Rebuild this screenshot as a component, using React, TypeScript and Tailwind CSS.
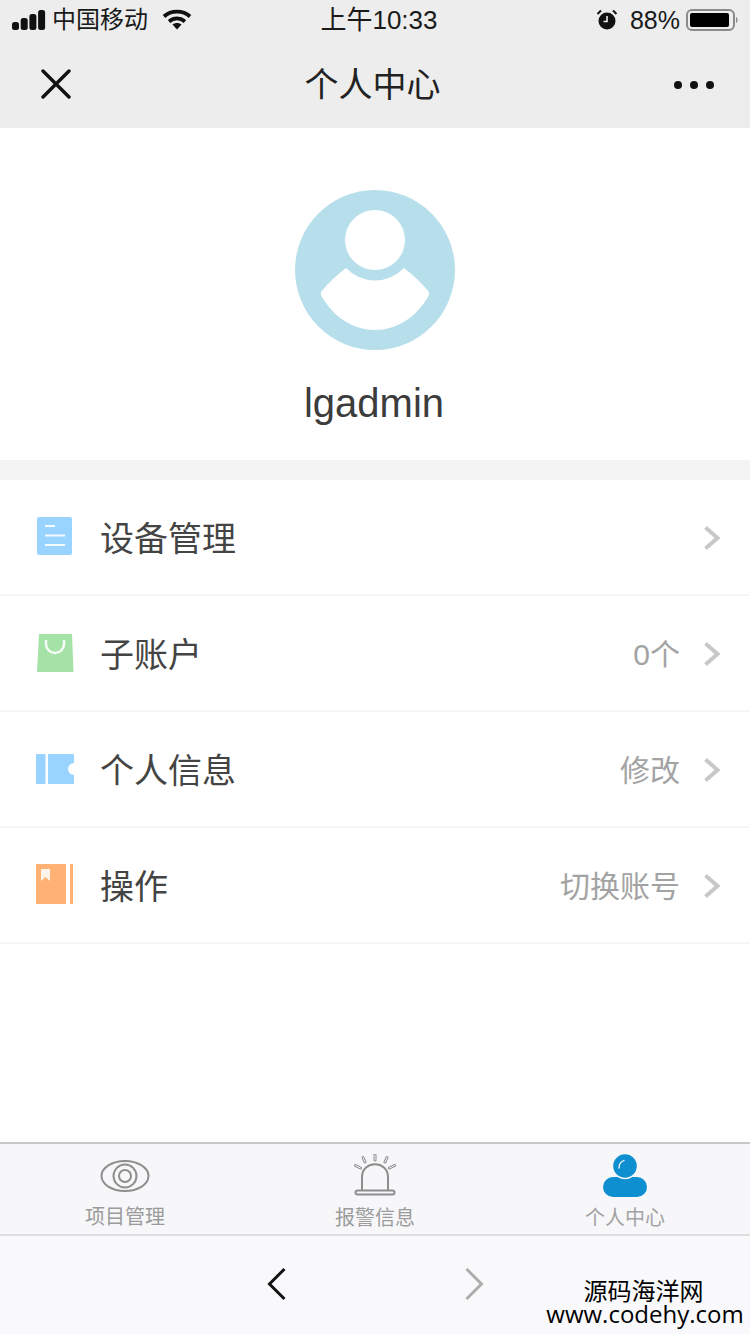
const cjk = "font-['Liberation_Sans','Noto_Sans_CJK_SC',sans-serif]";

function Chevron() {
  return (
    <svg className="h-[26px] w-[18px] shrink-0" viewBox="0 0 18 26" fill="none">
      <path d="M2.5 2.5 L14.5 13 L2.5 23.5" stroke="#c8c8c8" strokeWidth="4" strokeLinejoin="miter" />
    </svg>
  );
}

function ListIcon() {
  return (
    <svg className="h-[40px] w-[40px]" viewBox="0 0 40 40">
      <rect x="3" y="1" width="35" height="38" rx="2" fill="#99d3ff" />
      <path d="M11 10 H21 M11 19.5 H31 M11 29 H31" stroke="#ffffff" strokeWidth="2.2" opacity="0.9" />
    </svg>
  );
}

function BagIcon() {
  return (
    <svg className="h-[40px] w-[40px]" viewBox="0 0 40 40">
      <path d="M5 2 H38 L39.5 40 H3 Z" fill="#a5e2a8" />
      <path d="M12 8 V12 A9 9 0 0 0 30 12 V8" fill="none" stroke="#ffffff" strokeWidth="2.4" opacity="0.9" />
    </svg>
  );
}

function TicketIcon() {
  return (
    <svg className="h-[40px] w-[40px]" viewBox="0 0 40 40">
      <rect x="2" y="6" width="9.5" height="30" rx="1" fill="#99d3ff" />
      <path d="M14 7 A1 1 0 0 1 15 6 H39 A1 1 0 0 1 40 7 V15 A6 6 0 0 0 40 27 V35 A1 1 0 0 1 39 36 H15 A1 1 0 0 1 14 35 Z" fill="#99d3ff" />
    </svg>
  );
}

function BookIcon() {
  return (
    <svg className="h-[40px] w-[40px]" viewBox="0 0 40 40">
      <path d="M2 0 H32 V40 H2 Z" fill="#ffb273" />
      <path d="M36 0 H39 V40 H36 Z" fill="#ffb273" />
      <path d="M7 5 H16 V17 L11.5 13 L7 17 Z" fill="#ffffff" opacity="0.85" />
    </svg>
  );
}

const rows = [
  { label: "设备管理", value: "", icon: <ListIcon /> },
  { label: "子账户", value: "0个", icon: <BagIcon /> },
  { label: "个人信息", value: "修改", icon: <TicketIcon /> },
  { label: "操作", value: "切换账号", icon: <BookIcon /> },
];

export default function App() {
  return (
    <div className={`relative flex h-[1334px] w-[750px] flex-col overflow-hidden bg-white ${cjk}`}>
      {/* Status bar */}
      <div className="flex h-[40px] items-center justify-between bg-[#ededed] pl-3 pr-[10px] text-[#1a1a1a]">
        <div className="flex w-[200px] items-center">
          <svg className="h-[20px] w-[34px]" viewBox="0 0 34 20" fill="#111">
            <rect x="0" y="12" width="7" height="8" rx="2.5" />
            <rect x="8.7" y="8" width="7" height="12" rx="2.5" />
            <rect x="17.4" y="4" width="7" height="16" rx="2.5" />
            <rect x="26.1" y="0" width="7" height="20" rx="2.5" />
          </svg>
          <span className="ml-[6px] text-[24px] leading-none">中国移动</span>
          <svg className="ml-[14px] h-[22px] w-[30px]" viewBox="0 0 30 22" fill="none" stroke="#111" strokeWidth="3.8">
            <path d="M2 7.5 C9 1 21 1 28 7.5" />
            <path d="M7 12.5 C12 8.5 18 8.5 23 12.5" />
            <path d="M10.5 15.5 L15 20.5 L19.5 15.5 C17 13.5 13 13.5 10.5 15.5 Z" fill="#111" stroke="none" />
          </svg>
        </div>
        <span className="ml-[-50px] text-[26px] leading-none">上午10:33</span>
        <div className="flex items-center">
          <svg className="h-[22px] w-[22px]" viewBox="0 0 22 22">
            <circle cx="11" cy="12" r="8.5" fill="#111" />
            <path d="M11 7 V12.5 H7.5" fill="none" stroke="#ededed" strokeWidth="1.6" />
            <path d="M1.5 5 L5 1.5 M20.5 5 L17 1.5" stroke="#111" strokeWidth="2" />
          </svg>
          <span className="ml-[12px] text-[25px] leading-none">88%</span>
          <svg className="ml-[6px] h-[24px] w-[54px]" viewBox="0 0 54 24">
            <rect x="1" y="2" width="47" height="20" rx="5" fill="none" stroke="#8a8a8a" strokeWidth="2" />
            <rect x="4" y="5" width="39" height="14" rx="2" fill="#000" />
            <path d="M50 9 C52 9.5 52 14.5 50 15 Z" fill="#8a8a8a" />
          </svg>
        </div>
      </div>

      {/* Nav bar */}
      <div className="flex h-[88px] items-center justify-between bg-[#ededed] pt-[2px] pl-[41px] pr-[35px]">
        <svg className="-mt-[2px] h-[30px] w-[30px]" viewBox="0 0 30 30" fill="none">
          <path d="M2 2 L28 28 M28 2 L2 28" stroke="#111" strokeWidth="3.4" strokeLinecap="round" />
        </svg>
        <span className="ml-[1px] text-[34px] leading-none text-[#222]">个人中心</span>
        <svg className="h-[10px] w-[42px]" viewBox="0 0 42 10" fill="#111">
          <circle cx="5" cy="5" r="4" />
          <circle cx="21" cy="5" r="4" />
          <circle cx="37" cy="5" r="4" />
        </svg>
      </div>

      {/* Profile */}
      <div className="flex h-[332px] flex-col items-center pt-[62px]">
        <svg className="h-[160px] w-[160px]" viewBox="0 0 160 160">
          <circle cx="80" cy="80" r="80" fill="#b7dfeb" />
          <circle cx="80" cy="50" r="30" fill="#ffffff" />
          <path d="M26 102 Q25.5 104 26.5 106 C39 128 59 140 80 140 C101 140 121 128 133.5 106 Q134.5 104 134 102 C127 93 118 85 109 78 A40 40 0 0 1 51 78 C42 85 33 93 26 102 Z" fill="#ffffff" />
        </svg>
        <span className="-ml-[2px] mt-[29px] text-[40px] leading-[48px] text-[#3c3c3c]">lgadmin</span>
      </div>

      <div className="h-[20px] bg-[#f4f4f4]" />

      {/* Menu */}
      <div className="flex-1">
        {rows.map((row) => (
          <div key={row.label} className="flex h-[116px] items-center border-b-2 border-[#f6f6f6] pl-[34px] pr-[29px]">
            <div className="-mt-[2px] w-[66px]">{row.icon}</div>
            <span className="mt-[4px] text-[34px] leading-none text-[#444]">{row.label}</span>
            <span className="ml-auto mt-[4px] text-[30px] leading-none text-[#a3a3a3]">{row.value}</span>
            <div className="ml-[23px] mt-[2px]">
              <Chevron />
            </div>
          </div>
        ))}
      </div>

      {/* Tab bar */}
      <div className="flex h-[94px] border-y-2 border-t-[#c8c8c8] border-b-[#dedede] bg-[#f7f7fa]">
        <div className="flex flex-1 flex-col items-center pt-[15px]">
          <svg className="h-[34px] w-[50px]" viewBox="0 0 50 34" fill="none" stroke="#8e8e8e" strokeWidth="2">
            <ellipse cx="25" cy="17" rx="23.5" ry="15" />
            <circle cx="25" cy="17" r="11.5" />
            <circle cx="25" cy="17" r="6" />
          </svg>
          <span className="mt-[14px] text-[20px] leading-none text-[#9b9b9b]">项目管理</span>
        </div>
        <div className="flex flex-1 flex-col items-center pt-[18px]">
          <svg className="-mt-[8px] -mb-[1px] h-[42px] w-[44px]" viewBox="0 0 44 42" fill="none" stroke="#8e8e8e" strokeWidth="2">
            <path d="M9 37 V23 C9 6 35 6 35 23 V37" />
            <rect x="2.5" y="36.5" width="39" height="4" rx="2" />
            <path d="M22 1 V6 M10 3.5 L12 8 M34 3.5 L32 8 M2.5 11.5 L7.5 14 M41.5 11.5 L36.5 14" strokeWidth="3" strokeLinecap="round" />
            <path d="M22 1 V6 M10 3.5 L12 8 M34 3.5 L32 8 M2.5 11.5 L7.5 14 M41.5 11.5 L36.5 14" stroke="#f7f7fa" strokeWidth="1" strokeLinecap="round" />
          </svg>
          <span className="mt-[13px] text-[20px] leading-none text-[#9b9b9b]">报警信息</span>
        </div>
        <div className="flex flex-1 flex-col items-center pt-[10px]">
          <svg className="-mt-[1px] -mb-[1px] h-[44px] w-[44px]" viewBox="0 0 44 44">
            <rect x="0" y="24" width="44" height="20" rx="10" fill="#0e8fcf" />
            <circle cx="22" cy="13" r="12.5" fill="#0e8fcf" stroke="#f7f7fa" strokeWidth="1.4" />
            <path d="M16 15 C16 11 18 8.5 21 7.5" fill="none" stroke="#ffffff" strokeWidth="1.3" strokeLinecap="round" />
          </svg>
          <span className="mt-[12px] text-[20px] leading-none text-[#a3a3a3]">个人中心</span>
        </div>
      </div>

      {/* Browser controls */}
      <div className="flex h-[98px] items-center bg-[#f9f9fb] pb-[2px] pl-[267px]">
        <svg className="h-[34px] w-[20px]" viewBox="0 0 20 34" fill="none">
          <path d="M17.5 2 L2.5 17 L17.5 32" stroke="#111" strokeWidth="3" />
        </svg>
        <svg className="ml-[177px] h-[34px] w-[20px]" viewBox="0 0 20 34" fill="none">
          <path d="M2.5 2 L17.5 17 L2.5 32" stroke="#adadad" strokeWidth="3" />
        </svg>
      </div>

      {/* Watermark */}
      <div className="absolute bottom-[7px] right-[5px] flex w-[200px] flex-col items-center text-black">
        <span className="pr-[3px] text-[24px] leading-[18px]">源码海洋网</span>
        <span className="font-['Open_Sans',sans-serif] text-[24px] leading-[26px]">www.codehy.com</span>
      </div>
    </div>
  );
}
